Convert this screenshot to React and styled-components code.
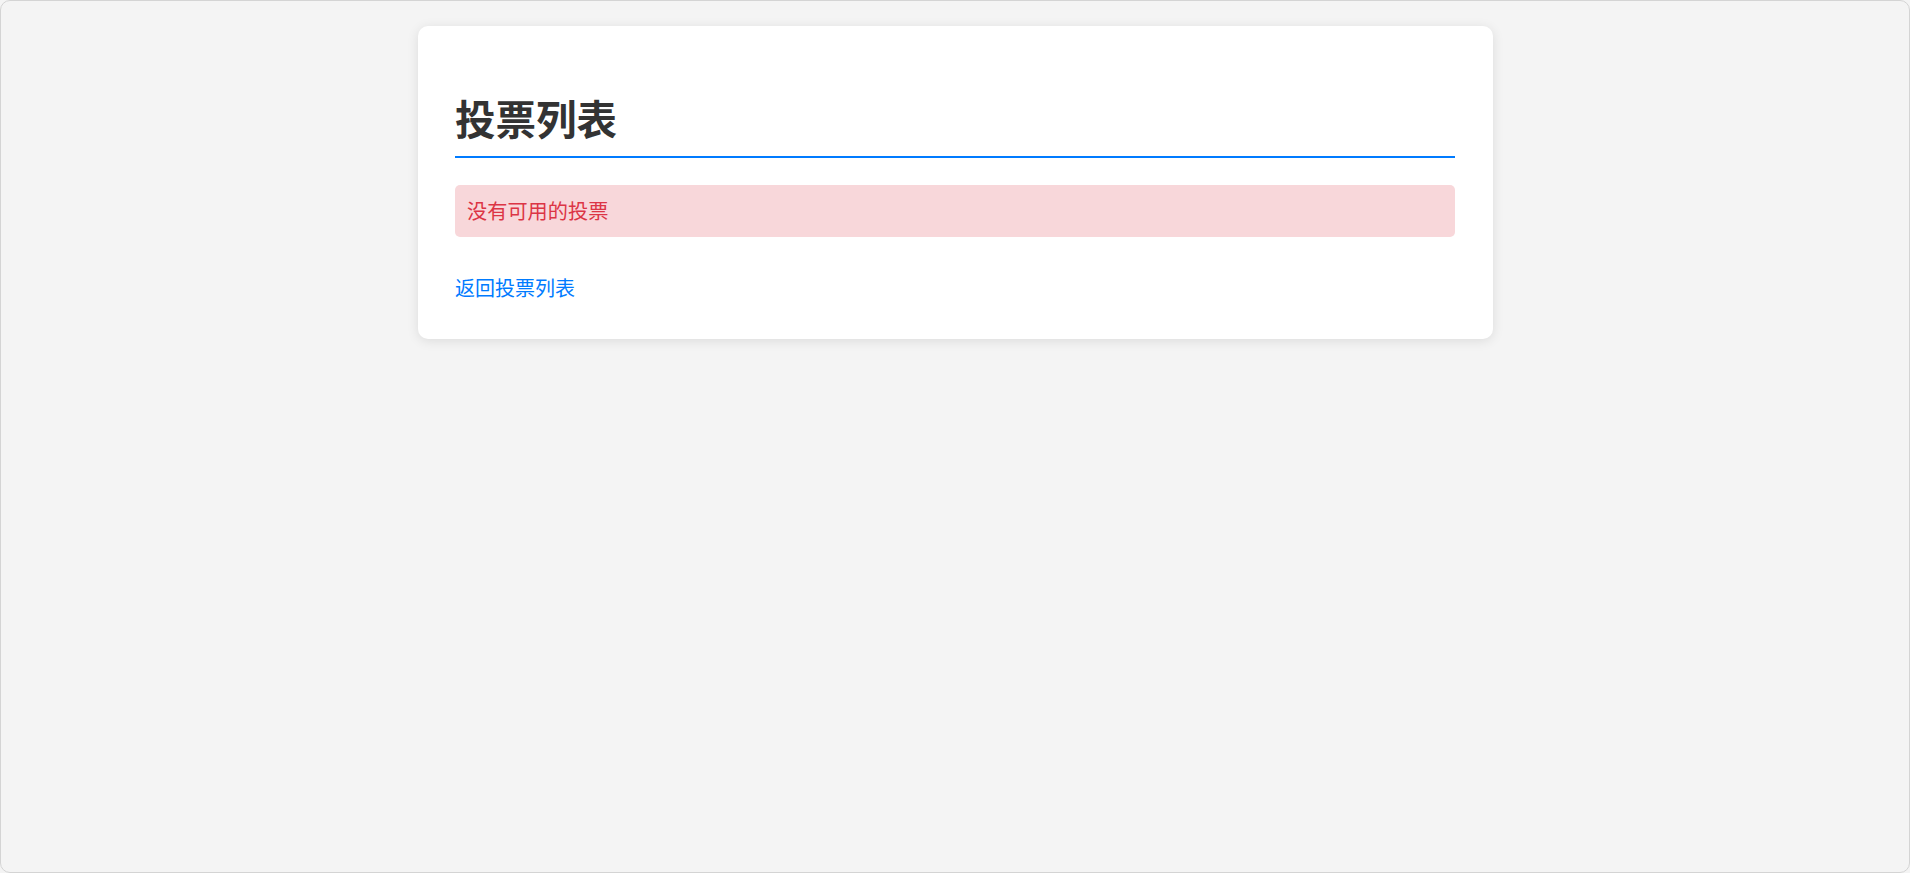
import styled, { createGlobalStyle } from "styled-components";

const GlobalStyle = createGlobalStyle`
  html, body {
    margin: 0;
    padding: 0;
    background: #f4f4f4;
  }

  body {
    font-family: "Noto Sans CJK SC", "Noto Sans", sans-serif;
  }
`;

function App() {
  return (
    <>
      <GlobalStyle />
      <Frame>
        <Card>
          <Title>投票列表</Title>
          <Alert>没有可用的投票</Alert>
          <BackLink href="#">返回投票列表</BackLink>
        </Card>
      </Frame>
    </>
  );
}

const Frame = styled.div`
  box-sizing: border-box;
  min-height: 100vh;
  padding-top: 25px;
  border: 1px solid #d4d4d4;
  border-radius: 10px;
  background-color: #f4f4f4;
`;

const Card = styled.div`
  box-sizing: border-box;
  width: 1075px;
  margin: 0 auto;
  padding: 37.5px 37.5px 37px;
  display: flex;
  flex-direction: column;
  align-items: flex-start;

  background-color: #ffffff;
  border-radius: 10px;
  box-shadow: 0 2px 12px rgba(0, 0, 0, 0.1);
`;

const Title = styled.h1`
  align-self: stretch;
  margin: 30px 0 0;
  padding-bottom: 14.4px;
  border-bottom: 2px solid #007bff;

  font-size: 40.5px;
  font-weight: 700;
  line-height: 48px;
  color: #333333;
`;

const Alert = styled.div`
  box-sizing: border-box;
  align-self: stretch;
  margin-top: 27px;
  padding: 12px;

  background-color: #f8d7da;
  border-radius: 5px;

  font-size: 20.2px;
  line-height: 28px;
  color: #dc3545;
`;

const BackLink = styled.a`
  margin-top: 37.5px;

  font-size: 20px;
  line-height: 28px;
  color: #007bff;
  text-decoration: none;
`;

export default App;
